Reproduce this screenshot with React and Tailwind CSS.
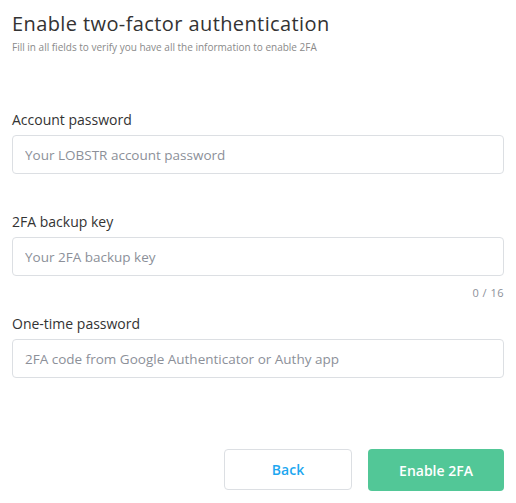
import React from 'react';

const Field = ({ label, placeholder, className = '' }) => (
  <div className={className}>
    <label className="block text-[14px] leading-[18px] text-[#333333]">{label}</label>
    <input
      type="text"
      placeholder={placeholder}
      className="mt-[6px] block h-[39px] w-full rounded-[4px] border border-[#dcdfe3] bg-white px-[12px] text-[13.5px] text-[#333] outline-none placeholder:text-[#8c9099]"
    />
  </div>
);

const App = () => {
  return (
    <div className="min-h-[503px] w-[516px] bg-white px-[12px] pt-[12px]" style={{ fontFamily: '"Open Sans", "Noto Sans", sans-serif' }}>
      <h1 className="text-[20px] leading-[24px] tracking-[0.4px] text-[#333333]">Enable two-factor authentication</h1>
      <p className="mt-[3px] text-[10px] leading-[16px] text-[#8a8a8a]">
        Fill in all fields to verify you have all the information to enable 2FA
      </p>

      <Field className="mt-[56px]" label="Account password" placeholder="Your LOBSTR account password" />
      <Field className="mt-[39px]" label="2FA backup key" placeholder="Your 2FA backup key" />
      <div className="mt-[9px] text-right text-[11px] leading-[16px] tracking-[0.5px] text-[#8c9099]">0 / 16</div>
      <Field className="mt-[14px]" label="One-time password" placeholder="2FA code from Google Authenticator or Authy app" />

      <div className="mt-[71px] flex justify-end gap-[16px]">
        <button className="h-[41px] w-[128px] rounded-[4px] border border-[#dcdfe3] bg-white text-[14px] font-semibold text-[#1ea7f0]">
          Back
        </button>
        <button className="h-[42px] w-[136px] rounded-[4px] bg-[#52c797] text-[14px] font-semibold text-white">
          Enable 2FA
        </button>
      </div>
    </div>
  );
};

export default App;
